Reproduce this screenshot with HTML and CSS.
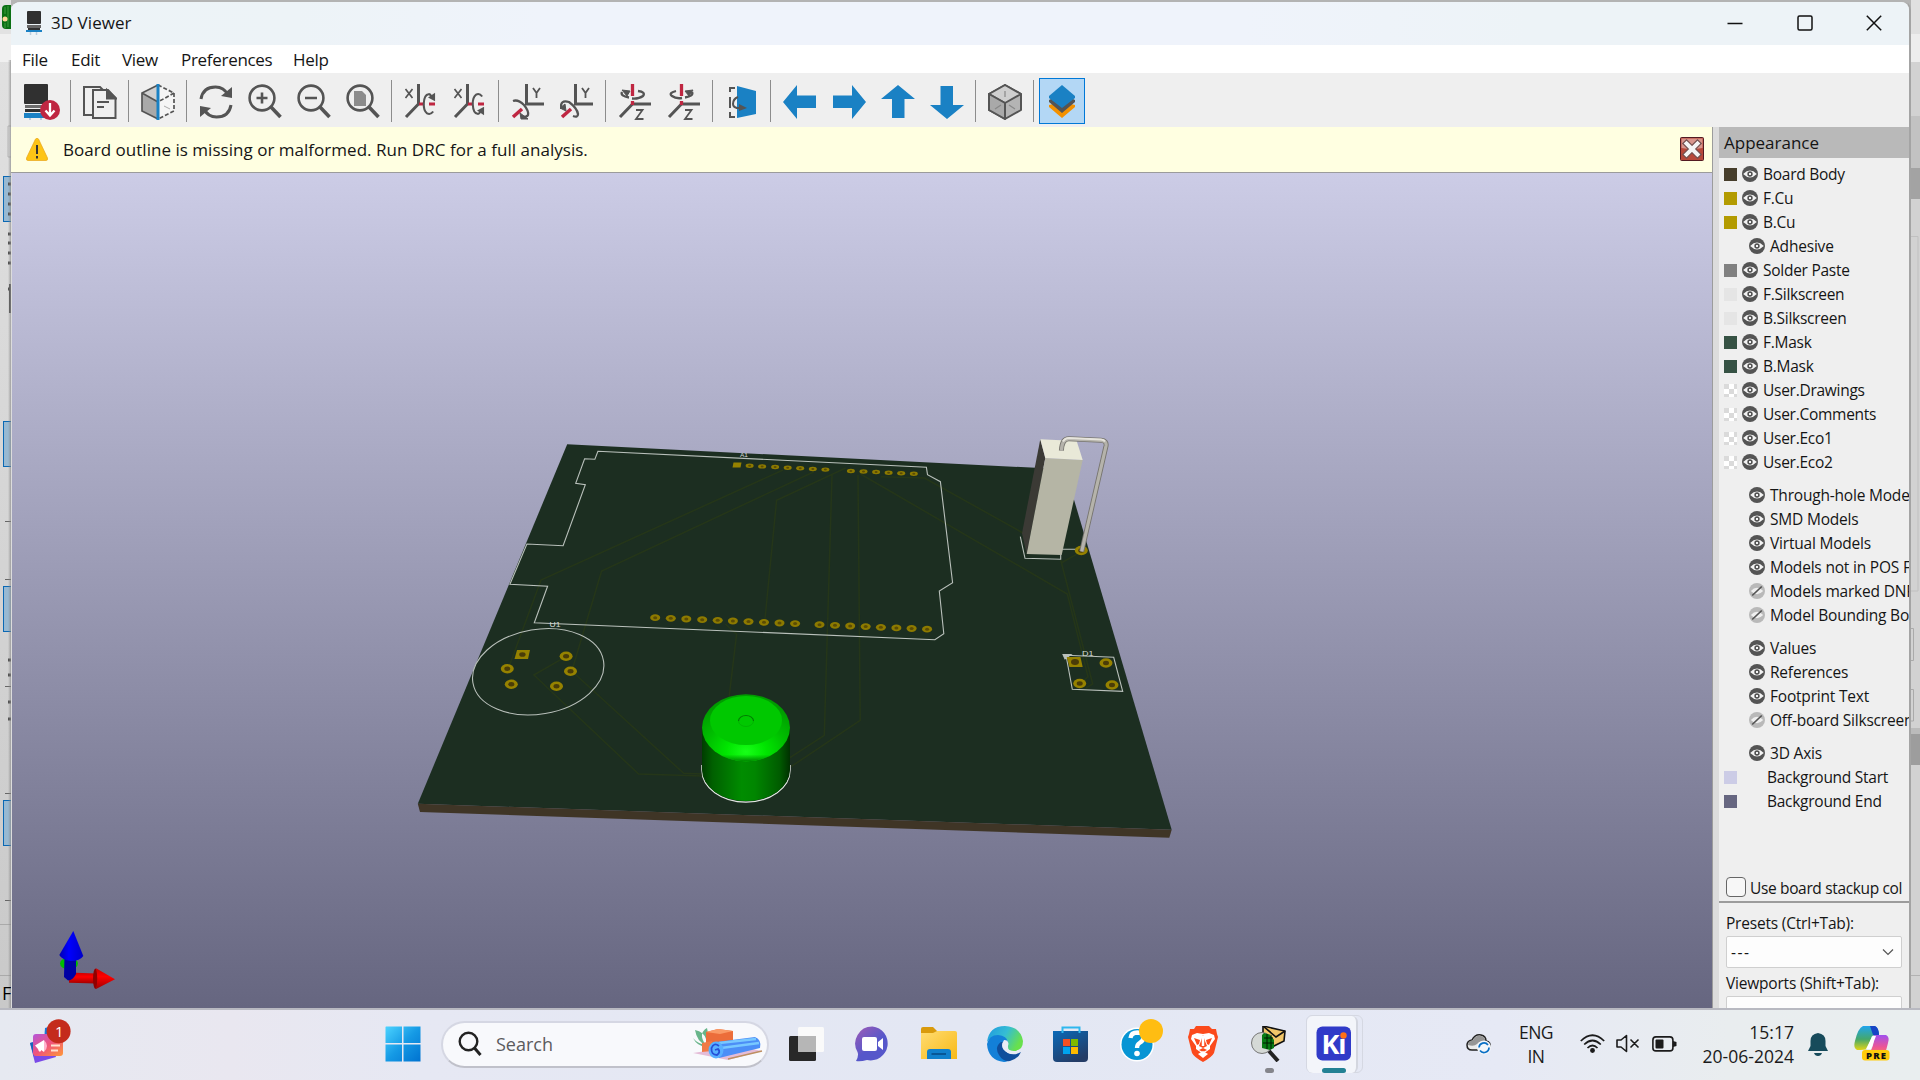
FILE: index.html
```html
<!DOCTYPE html>
<html lang="en">
<head>
<meta charset="utf-8">
<title>3D Viewer</title>
<link rel="stylesheet" href="styles.css">
</head>
<body>
<svg class="defs" aria-hidden="true">
  <defs>
    <symbol id="eye" viewBox="0 0 16 16"><circle cx="8" cy="8" r="8" fill="#545454"/><path d="M1.2 8Q8 1.2 14.800 8Q8 14.800 1.200 8Z" fill="#f4f4f4"/><circle cx="8" cy="8" r="2.700" fill="#545454"/><rect x="7" y="7" width="2" height="2" fill="#f4f4f4"/></symbol>
    <symbol id="eye-off" viewBox="0 0 16 16"><circle cx="8" cy="8" r="8" fill="#b9b9b9"/><path d="M1.800 8Q8 1.600 14.200 8Q8 14.400 1.800 8Z" fill="#efefef"/><path d="M3.200 12.500L12.800 3.500" stroke="#545454" stroke-width="1.700"/></symbol>
    <symbol id="magnifier" viewBox="0 0 34 36"><circle cx="14" cy="14" r="12.400" fill="none" stroke="#545454" stroke-width="2.600"/><path d="M23 23L32.500 33" stroke="#545454" stroke-width="3.600"/></symbol>
    <symbol id="turn" viewBox="0 0 16 26"><path d="M13 21Q10 25 6.500 23Q2.500 20 3 12Q3.500 3 8 2.500Q10 2 11 5" fill="none" stroke="#545454" stroke-width="2.200"/><path d="M7.500 6L15 1V10Z" fill="#545454"/></symbol>
    <symbol id="arrow" viewBox="0 0 34 34"><path d="M0 17L14 0V10.500H33V23H14V34Z" fill="#1a81c4"/></symbol>
    <linearGradient id="bg" x2="0" y2="1"><stop stop-color="#cccce6"/><stop offset="1" stop-color="#666680"/></linearGradient>
  </defs>
</svg>

<div class="desktop">
  <svg class="behind-left" viewBox="0 0 11 1008">
    <defs><linearGradient id="lg" x2="0" y2="1"><stop stop-color="#e2e2e2"/><stop offset="1" stop-color="#c9c9c9"/></linearGradient>
    <linearGradient id="sh"><stop stop-color="#8a8a8a" stop-opacity="0"/><stop offset="1" stop-color="#888" stop-opacity=".7"/></linearGradient></defs>
    <rect width="11" height="1008" fill="url(#lg)"/>
    <rect width="11" height="34" fill="#e2e2e2"/><rect y="34" width="11" height="28" fill="#f0f0f0"/>
    <path d="M11 5H6Q2 5 2 9V25Q2 29 6 29H11Z" fill="#0b7014"/><path d="M5 7V14M8 6V27M5 23V28" stroke="#3f9c3c"/><circle cx="5" cy="19" r="2.500" fill="#ffd79a"/>
    <path d="M11 126H8V157H11" fill="none" stroke="#b5b5b5"/>
    <g fill="#98b9d2" stroke="#0a68b4"><rect x="3.500" y="176.500" width="10" height="45"/><rect x="3.500" y="421.500" width="10" height="45"/><rect x="3.500" y="586.500" width="10" height="45"/><rect x="3.500" y="800.500" width="10" height="45"/></g>
    <path d="M8 184H11M8 194H11M8 204H11M8 214H11M8 234H11M8 243H11M8 253H11M8 263H11M8 289H11M10.500 284V313M8 660H11M8 675H11M8 702H11M8 719H11" stroke="#4c4c4c" stroke-width="3"/>
    <path d="M5 521.500H11M5 579.500H11M5 686.500H11M5 793.500H11M5 900.500H11" stroke="#666"/>
    <path d="M0 924.500H11M0 975.500H11" stroke="#aaa"/>
    <rect x="8" y="60" width="3" height="948" fill="url(#sh)"/>
    <text x="2" y="1000" class="status-letter">F</text>
  </svg>

  <main class="window">
    <header class="titlebar">
      <svg class="app-icon" viewBox="0 0 16 24"><rect x="1" width="14" height="13" rx="1" fill="#303030"/><path d="M1 14H15V17H1Z" fill="#666"/><rect x="2" y="17" width="12" height="2" fill="#303030"/><path d="M0 19H16V21H0Z" fill="#1a81c4"/><path d="M4.500 21V24M10.500 21V24" stroke="#bcd" stroke-width="1.500"/></svg>
      <span class="title">3D Viewer</span>
      <div class="window-controls">
        <svg viewBox="0 0 16 16"><path d="M.5 8.500H15.500"/></svg>
        <svg viewBox="0 0 16 16"><rect x="1" y="1" width="14" height="14" rx="1.500"/></svg>
        <svg viewBox="0 0 16 16"><path d="M.8.8L15.200 15.200M15.200.8L.8 15.200"/></svg>
      </div>
    </header>

    <nav class="menubar"><span>File</span><span>Edit</span><span>View</span><span>Preferences</span><span>Help</span></nav>

    <div class="toolbar">
      <i class="tool"><svg viewBox="0 0 36 36" class="wide"><rect x="0" width="24" height="20" rx="1" fill="#303030"/><path d="M1 21H23V24H1Z" fill="#6c6c6c"/><path d="M1 25H22V28H1Z" fill="#303030"/><rect y="29" width="23" height="5" fill="#1a81c4"/><path d="M6 34V36M17 34V36" stroke="#bcd" stroke-width="2"/><circle cx="26" cy="26" r="10" fill="#bf2641"/><path d="M26 19V31M21.500 26.500L26 31.500L30.500 26.500" fill="none" stroke="#fff" stroke-width="2.300"/></svg></i>
      <b class="sep"></b>
      <i class="tool"><svg viewBox="0 0 34 36" fill="none" stroke="#545454" stroke-width="2"><path d="M9 31H1V3H17L20 6"/><path d="M10 6H25L32.500 14V34H10Z" fill="#efefef"/><path d="M24 6V14.500H33Z" fill="#545454"/><path d="M14 18H26M14 23H21"/></svg></i>
      <b class="sep"></b>
      <i class="tool"><svg viewBox="0 0 34 36"><path d="M1 9L17 18V35L1 27Z" fill="#a9a9a9"/><path d="M1 9L17 1V18Z" fill="#d0d0d0"/><path d="M17 1L1 9V27L17 35M1 9L17 18" fill="none" stroke="#545454" stroke-width="1.700"/><path d="M17 1L33 9V27L17 35M33 9L17 18" fill="#f5f5f5" stroke="#545454" stroke-width="1.700" stroke-dasharray="4 2"/><path d="M23 22L29 25" stroke="#aaa"/><path d="M17 0V36" stroke="#1a81c4" stroke-width="3"/></svg></i>
      <b class="sep"></b>
      <i class="tool"><svg viewBox="0 0 34 36" fill="none" stroke="#545454" stroke-width="3"><path d="M2 15Q4 3 16.500 3Q25 3 29 11M32 21Q30 33 17.500 33Q9 33 5 25"/><path d="M33 3V14L22 12Z" fill="#545454" stroke="none"/><path d="M1 33V22L12 24Z" fill="#545454" stroke="none"/></svg></i>
      <i class="tool"><svg viewBox="0 0 34 36"><use href="#magnifier"/><path d="M8.500 14H19.500M14 8.500V19.500" stroke="#545454" stroke-width="2.600"/></svg></i>
      <i class="tool"><svg viewBox="0 0 34 36"><use href="#magnifier"/><path d="M8 14H20" stroke="#545454" stroke-width="2.600"/></svg></i>
      <i class="tool"><svg viewBox="0 0 34 36"><use href="#magnifier"/><path d="M8 7H16L20 11V22H8Z" fill="#8c8c8c"/></svg></i>
      <b class="sep"></b>
      <i class="tool"><svg viewBox="0 0 34 36" stroke="#545454"><path d="M14.500 0V20L2 33" fill="none" stroke-width="3"/><path d="M1.500 5L8.500 14M8.500 5L1.500 14" stroke-width="1.700"/><path d="M15 20H20M25 20H31" stroke="#bf2641" stroke-width="3"/><use href="#turn" x="17" y="7" width="15" height="26" stroke="none"/></svg></i>
      <i class="tool"><svg viewBox="0 0 34 36" stroke="#545454"><path d="M14.500 0V20L2 33" fill="none" stroke-width="3"/><path d="M1.500 5L8.500 14M8.500 5L1.500 14" stroke-width="1.700"/><path d="M15 20H20M25 20H31" stroke="#bf2641" stroke-width="3"/><use href="#turn" width="15" height="26" stroke="none" transform="translate(17 33) scale(1 -1)" /></svg></i>
      <b class="sep"></b>
      <i class="tool"><svg viewBox="0 0 34 36" stroke="#545454"><path d="M15.500 0V20H33" fill="none" stroke-width="3"/><path d="M22 4L25.500 9L29 4M25.500 9V14" fill="none" stroke-width="1.800"/><path d="M2 33L11 25" stroke="#bf2641" stroke-width="3.500"/><path d="M2 17Q7 15 13 21Q18 27 17 31Q16 33 12 33" fill="none" stroke-width="2.300"/><path d="M9 29L17 35L10 35Z" fill="#545454"/></svg></i>
      <i class="tool"><svg viewBox="0 0 34 36" stroke="#545454"><path d="M15.500 0V20H33" fill="none" stroke-width="3"/><path d="M22 4L25.500 9L29 4M25.500 9V14" fill="none" stroke-width="1.800"/><path d="M2 33L11 25" stroke="#bf2641" stroke-width="3.500"/><path d="M1 25Q0 15 9 18Q17 24 18 30Q18 34 13 32" fill="none" stroke-width="2.300"/><path d="M0 24L5 20L6 27Z" fill="#545454"/></svg></i>
      <b class="sep"></b>
      <i class="tool"><svg viewBox="0 0 34 36" stroke="#545454" fill="none"><path d="M14.500 18V20H33M14.500 20L2 33" stroke-width="3"/><path d="M14.500 0V12M14.500 17V21" stroke="#bf2641" stroke-width="3.300"/><path d="M11 13.500Q2 12 4 8M20 7Q28 8 25 12Q21 15 14 14.500" stroke-width="2.300"/><path d="M4 6L12 7L9 12Z" fill="#545454"/><path d="M18 26H24.500L18 35H25.500" stroke-width="1.800"/></svg></i>
      <i class="tool"><svg viewBox="0 0 34 36" stroke="#545454" fill="none"><path d="M14.500 18V20H33M14.500 20L2 33" stroke-width="3"/><path d="M14.500 0V12M14.500 17V21" stroke="#bf2641" stroke-width="3.300"/><path d="M9 7Q1 9 5 12Q9 15 15 14M18 13.500Q27 12 25 8" stroke-width="2.300"/><path d="M26 6L18 7L22 12Z" fill="#545454"/><path d="M18 26H24.500L18 35H25.500" stroke-width="1.800"/></svg></i>
      <b class="sep"></b>
      <i class="tool"><svg viewBox="0 0 34 36"><path d="M12 2L31 7V30L12 34Z" fill="#1a81c4"/><path d="M10 4H5V8M5 13V24M5 28V33H10M13 13Q8 15 8 20Q8 23 12 24" fill="none" stroke="#545454" stroke-width="2"/><path d="M11 24H18" stroke="#545454" stroke-width="2"/><path d="M14 20L22 24L14 27Z" fill="#545454"/></svg></i>
      <b class="sep"></b>
      <i class="tool"><svg viewBox="0 0 34 36"><use href="#arrow" y="1" width="34" height="34"/></svg></i>
      <i class="tool"><svg viewBox="0 0 34 36"><use href="#arrow" width="34" height="34" transform="translate(34 1) scale(-1 1)"/></svg></i>
      <i class="tool"><svg viewBox="0 0 34 36"><use href="#arrow" width="34" height="34" transform="translate(34 1) rotate(90)"/></svg></i>
      <i class="tool"><svg viewBox="0 0 34 36"><use href="#arrow" width="34" height="34" transform="translate(0 35) rotate(-90)"/></svg></i>
      <b class="sep"></b>
      <i class="tool"><svg viewBox="0 0 34 36" stroke="#545454" stroke-width="2" stroke-linejoin="round"><path d="M17 1L33 10V26L17 35L1 26V10Z" fill="#b4b4b4"/><path d="M17 1L33 10L17 19L1 10Z" fill="#cfcfcf"/><path d="M1 10L17 19V35L1 26Z" fill="#a9a9a9"/><path d="M17 7V13M7 25L13 21M21 21L27 25" stroke="#888" stroke-width="1.200"/></svg></i>
      <b class="sep"></b>
      <i class="tool active"><svg viewBox="0 0 34 36"><path d="M4 22V24L17 35L30 24V22L26 21L17 29L8 21Z" fill="#f39100"/><path d="M4 17V19L17 30L30 19V17L26 15L17 23L8 15Z" fill="#545454"/><path d="M17 2L30 13V15L17 25L4 15V13Z" fill="#1a81c4"/></svg></i>
    </div>

    <div class="workspace">
      <section class="viewer">
        <div class="infobar">
          <svg class="warn" viewBox="0 0 22 23"><path d="M9.500 1Q11 -.6 12.500 1L21.500 20Q22 22.500 20 22.500H2Q0 22.500.5 20Z" fill="#fdc416" stroke="#e8a51a" stroke-width=".7"/><path d="M11 7V16M11 18V20.500" stroke="#333" stroke-width="2"/></svg>
          <span>Board outline is missing or malformed. Run DRC for a full analysis.</span>
          <svg class="dismiss" viewBox="0 0 24 24"><rect x=".5" y=".5" width="23" height="23" rx="1" fill="#b8483a" stroke="#521a22"/><path d="M1.500 1.500H22.500V11Q12 13 1.500 11Z" fill="#d9958c"/><path d="M6.500 6.500L17.500 17.500M17.500 6.500L6.500 17.500" stroke="#75504f" stroke-width="6.500" stroke-linecap="square"/><path d="M6.500 6.500L17.500 17.500M17.500 6.500L6.500 17.500" stroke="#f4f4f4" stroke-width="4" stroke-linecap="square"/></svg>
        </div>
        <svg class="scene" viewBox="12 173 1700 835">
          <defs>
            <linearGradient id="side"><stop stop-color="#003c00"/><stop offset=".12" stop-color="#006000"/><stop offset=".45" stop-color="#008c00"/><stop offset=".6" stop-color="#008600"/><stop offset=".88" stop-color="#005c00"/><stop offset="1" stop-color="#003000"/></linearGradient>
            <radialGradient id="dome" cx=".5" cy=".86" r=".75"><stop stop-color="#18ff18"/><stop offset=".3" stop-color="#00e600"/><stop offset=".62" stop-color="#00be00"/><stop offset="1" stop-color="#009c00"/></radialGradient>
            <linearGradient id="domeshade" x2="0" y2="1"><stop offset=".9" stop-color="#008c00" stop-opacity="0"/><stop offset="1" stop-color="#008600"/></linearGradient>
            <linearGradient id="red" x2="0" y2="1"><stop stop-color="#c00"/><stop offset=".4" stop-color="#f00"/><stop offset="1" stop-color="#a00000"/></linearGradient>
            <linearGradient id="blue"><stop stop-color="#0000b0"/><stop offset=".4" stop-color="#00f"/><stop offset="1" stop-color="#0000c8"/></linearGradient>
            <g id="pad"><ellipse rx="6.500" ry="4.700" fill="#968200"/><ellipse rx="3" ry="2.200" fill="#4a3c08"/></g>
            <g id="pin"><ellipse rx="5" ry="3.400" fill="#8d7a00"/><ellipse rx="2" ry="1.500" fill="#5b4c04"/></g>
            <g id="pin-far"><ellipse rx="4" ry="2.200" fill="#8d7a00"/><ellipse rx="1.500" ry="1" fill="#5b4c04"/></g>
          </defs>
          <rect x="12" y="173" width="1700" height="835" fill="url(#bg)"/>
          <path d="M567.200 444.300L1065 469.300L1171.700 829.700L417.800 803.700Z" fill="#1c2e21"/>
          <path d="M417.800 803.700L1171.700 829.700L1169.300 837.700L420 812Z" fill="#3f3526"/>
          <g fill="none" stroke="#253619" stroke-width="1.500">
            <path d="M783 470L541 580L510 664M814 471.700L601.600 571L572.700 668M845.700 468L776.600 500.300L765 619M832 475L824.300 735.300L788.400 758.700M858 475L860.200 720.300L791 766.700M725.500 624L736.600 634.300L729.200 696M562.800 658.300L533.900 675L638.600 774L703 776M573.900 673L683.700 773.300L703 774"/>
            <path d="M860.500 474L1067.300 594L1088 676.700L1082 682M881 476.700L924.500 478L1023 533M1060.700 560L1092.700 684L1086 688M1062 562.500L1080 552.300"/>
          </g>
          <g fill="none" stroke="#b9c0bb" stroke-width="1.100">
            <path d="M597.900 451.300L926.400 467.300L927.500 474.700L940.400 481.700L952.600 582.700L939.300 591L943.800 633.700L934.900 639.700L534.300 622.700L547.600 586.300L509.900 584.300L526.900 544L563.100 545.700L585.300 484.700L575.700 483.300L584.600 458.700L594.900 459.300Z"/>
            <ellipse cx="538.200" cy="671.800" rx="66.200" ry="42.300" transform="rotate(-9.500 538.200 671.800)"/>
            <path d="M1066 655.300L1113.700 657.300L1122.700 691.300L1072.300 689.300ZM1020.300 536.700L1025 558.300L1060.700 559.300V555M1061 549.300H1076"/>
            <path d="M1063 654.500H1071L1065 659Z" fill="#b9c0bb"/>
          </g>
          <g class="silk-text"><text x="740" y="457" class="far" textLength="8" lengthAdjust="spacingAndGlyphs">A1</text><text x="549.500" y="626.500" textLength="11" lengthAdjust="spacingAndGlyphs">U1</text><text x="1082" y="655.500" textLength="11.500" lengthAdjust="spacingAndGlyphs">D1</text></g>
          <path d="M733.500 462.500H741.500L740.500 467.500H732.500Z" fill="#968200"/>
          <use href="#pin-far" x="749.600" y="465.800"/><use href="#pin-far" x="762.100" y="466.400"/><use href="#pin-far" x="775.100" y="467"/><use href="#pin-far" x="787.700" y="467.700"/><use href="#pin-far" x="800.200" y="468.300"/><use href="#pin-far" x="812.800" y="469"/><use href="#pin-far" x="825.400" y="469.600"/>
          <use href="#pin-far" x="850.900" y="471"/><use href="#pin-far" x="863.500" y="471.500"/><use href="#pin-far" x="876.100" y="472"/><use href="#pin-far" x="888.600" y="472.700"/><use href="#pin-far" x="901.200" y="473.200"/><use href="#pin-far" x="913.800" y="473.800"/>
          <use href="#pin" x="655.200" y="617.700"/><use href="#pin" x="670.800" y="618.300"/><use href="#pin" x="686.300" y="619"/><use href="#pin" x="702.200" y="619.700"/><use href="#pin" x="717.700" y="620.300"/><use href="#pin" x="732.900" y="621"/><use href="#pin" x="748.500" y="621.600"/><use href="#pin" x="764" y="622.300"/><use href="#pin" x="779.500" y="623"/><use href="#pin" x="795.100" y="623.600"/>
          <use href="#pin" x="819.500" y="624.700"/><use href="#pin" x="835" y="625.300"/><use href="#pin" x="850.200" y="626"/><use href="#pin" x="865.700" y="626.600"/><use href="#pin" x="880.900" y="627.300"/><use href="#pin" x="896.400" y="627.900"/><use href="#pin" x="911.600" y="628.500"/><use href="#pin" x="927.100" y="629.200"/>
          <path d="M517 650H530L528 659H514.500Z" fill="#968200"/><ellipse cx="522.400" cy="654.500" rx="3.200" ry="2.300" fill="#4a3c08"/>
          <use href="#pad" x="507.300" y="668.700"/><use href="#pad" x="511.300" y="684.300"/><use href="#pad" x="566.100" y="656.300"/><use href="#pad" x="570.500" y="671.300"/><use href="#pad" x="556.500" y="686.200"/>
          <path d="M1066.700 657H1080.500L1082.700 667H1069.500Z" fill="#968200"/><ellipse cx="1075" cy="662" rx="4" ry="3" fill="#4a3c08"/>
          <use href="#pad" x="1106" y="663"/><use href="#pad" x="1079.700" y="683.500"/><use href="#pad" x="1112" y="685"/><use href="#pad" x="1081.300" y="550.500"/>
          <path d="M701.900 765V770A44.100 32.200 0 0 0 790.100 770V765" fill="none" stroke="#e4e8e4" stroke-width="1.200"/>
          <path d="M702 728V770A44 31 0 0 0 790 770V728Z" fill="url(#side)"/>
          <ellipse cx="746" cy="727.700" rx="44" ry="33.500" fill="url(#dome)"/><ellipse cx="746" cy="727.700" rx="44" ry="33.500" fill="url(#domeshade)"/>
          <ellipse cx="746" cy="720.500" rx="36" ry="24.500" fill="#00c800"/>
          <path d="M738.500 721A7.500 5.500 0 0 1 753.500 721" fill="none" stroke="#007c00" stroke-width="1.200"/><path d="M738.500 721A7.500 5.500 0 0 0 753.500 721" fill="none" stroke="#00b400"/>
          <path d="M1040.300 439.300L1045.300 458L1026.700 554L1022 533.300Z" fill="#3b3a35"/>
          <path d="M1045.300 458L1082.700 460L1061.700 555L1026.700 554Z" fill="#b5b5a5"/>
          <path d="M1040.300 439.300L1076.700 441L1082.700 460L1045.300 458Z" fill="#e9e9d8"/>
          <path d="M1061.400 450.700Q1062 438.500 1069 438.800L1101 440.300Q1107 440.800 1106 446L1081.700 551.500" fill="none" stroke="#77756f" stroke-width="5"/>
          <path d="M1061.400 450.700Q1062 438.500 1069 438.800L1101 440.300Q1107 440.800 1106 446L1081.700 551.500" fill="none" stroke="#b5b3ab" stroke-width="3.200"/>
          <path d="M1063 441.500Q1065 438 1069 438L1101 439.500Q1104 439.800 1105 441.500" fill="none" stroke="#e6e4dc" stroke-width="2.200"/>
          <ellipse cx="69" cy="963.500" rx="9" ry="6" fill="#00bd00"/>
          <path d="M69 972.500L96 973.500V983.500L69 982.700Z" fill="url(#red)"/>
          <ellipse cx="95.500" cy="978.700" rx="2.500" ry="10.300" fill="#900000"/><path d="M96 968.300L115 979.300L96 989Q98.500 979 96 968.300Z" fill="url(#red)"/>
          <path d="M64.500 955H76V974Q73 980 68 980.500L64 977Z" fill="#0000a4"/>
          <path d="M73.300 931L83.300 956Q80 961 71 961Q62 960 59.300 955Z" fill="url(#blue)"/>
        </svg>
      </section>

      <aside class="appearance">
        <h2>Appearance</h2>
        <ul class="layers">
          <li><i class="sw body"></i><svg><use href="#eye"/></svg>Board Body</li>
          <li><i class="sw cu"></i><svg><use href="#eye"/></svg>F.Cu</li>
          <li><i class="sw cu"></i><svg><use href="#eye"/></svg>B.Cu</li>
          <li class="in"><svg><use href="#eye"/></svg>Adhesive</li>
          <li><i class="sw paste"></i><svg><use href="#eye"/></svg>Solder Paste</li>
          <li><i class="sw silk"></i><svg><use href="#eye"/></svg>F.Silkscreen</li>
          <li><i class="sw silk"></i><svg><use href="#eye"/></svg>B.Silkscreen</li>
          <li><i class="sw mask"></i><svg><use href="#eye"/></svg>F.Mask</li>
          <li><i class="sw mask"></i><svg><use href="#eye"/></svg>B.Mask</li>
          <li><i class="sw clear"></i><svg><use href="#eye"/></svg>User.Drawings</li>
          <li><i class="sw clear"></i><svg><use href="#eye"/></svg>User.Comments</li>
          <li><i class="sw clear"></i><svg><use href="#eye"/></svg>User.Eco1</li>
          <li><i class="sw clear"></i><svg><use href="#eye"/></svg>User.Eco2</li>
        </ul>
        <ul class="layers">
          <li class="in"><svg><use href="#eye"/></svg>Through-hole Models</li>
          <li class="in"><svg><use href="#eye"/></svg>SMD Models</li>
          <li class="in"><svg><use href="#eye"/></svg>Virtual Models</li>
          <li class="in"><svg><use href="#eye"/></svg>Models not in POS File</li>
          <li class="in"><svg><use href="#eye-off"/></svg>Models marked DNP</li>
          <li class="in"><svg><use href="#eye-off"/></svg>Model Bounding Boxes</li>
        </ul>
        <ul class="layers">
          <li class="in"><svg><use href="#eye"/></svg>Values</li>
          <li class="in"><svg><use href="#eye"/></svg>References</li>
          <li class="in"><svg><use href="#eye"/></svg>Footprint Text</li>
          <li class="in"><svg><use href="#eye-off"/></svg>Off-board Silkscreen</li>
        </ul>
        <ul class="layers">
          <li class="in"><svg><use href="#eye"/></svg>3D Axis</li>
          <li class="plain"><i class="sw start"></i>Background Start</li>
          <li class="plain"><i class="sw end"></i>Background End</li>
        </ul>
        <div class="stackup"><i class="checkbox"></i><span>Use board stackup col</span></div>
        <div class="presets">
          <label>Presets (Ctrl+Tab):</label>
          <div class="combo"><span>---</span><svg viewBox="0 0 12 8"><path d="M1 1.500L6 6.500L11 1.500"/></svg></div>
          <label class="second">Viewports (Shift+Tab):</label>
          <div class="combo"></div>
        </div>
      </aside>
    </div>
  </main>

  <svg class="behind-right" viewBox="0 0 9 1008"><rect width="9" height="1008" fill="#d2d2d2"/><rect width="9" height="34" fill="#e0e0e0"/><rect y="34" width="9" height="28" fill="#ededed"/><rect y="116" width="9" height="52" fill="#c2c2c2"/><rect y="168" width="9" height="31" fill="#a3a3a3"/><path d="M0 236.500H7V591H0" fill="none" stroke="#c0c0c0"/><path d="M0 628.500H2.500V660.500H0M0 689.500H2.500V721H0" fill="none" stroke="#aaa"/><rect y="728" width="9" height="6" fill="#bbb"/><rect y="734" width="9" height="31" fill="#9d9d9d"/><path d="M0 975.500H9" stroke="#b2b2b2"/></svg>
</div>

<footer class="taskbar">
  <svg class="widgets" viewBox="30 1018 42 46"><defs><linearGradient id="wg" x2="1" y2="1"><stop stop-color="#b455dc"/><stop offset=".5" stop-color="#f0537a"/><stop offset="1" stop-color="#ff9838"/></linearGradient></defs><path d="M45 1027L52 1025V1040H44Z" fill="#1577dc"/><path d="M30 1042L50 1036L56 1056L35 1062Z" fill="#7a4ae8"/><path d="M30 1042L34 1041V1056Z" fill="#1768b8"/><rect x="33" y="1033" width="30" height="22" rx="3" fill="url(#wg)"/><path d="M35 1044.500L44 1039V1051L41 1049V1050Q39 1052 38 1048Z" fill="#fff"/><path d="M44 1039Q50 1045 44 1051Z" fill="#ffb3cd"/><path d="M51 1044.500H60M51 1049.500H58" stroke="#ffe0d0" stroke-width="2"/><circle cx="58.600" cy="1030.300" r="12" fill="#c42b1c"/><text x="55" y="1036" class="badge-text">1</text></svg>
  <svg class="start" viewBox="0 0 36 36"><defs><linearGradient id="wn" x2="1" y2="1"><stop stop-color="#4cd3ff"/><stop offset=".5" stop-color="#159ae5"/><stop offset="1" stop-color="#0072d0"/></linearGradient></defs><path d="M1 .5H17V17H.5V1ZM18.500.5H35.500V17H18.500ZM.5 18.500H17V35.500H.5ZM18.500 18.500H35.500V35.500H18.500Z" fill="url(#wn)"/></svg>
  <div class="search">
    <svg class="lens" viewBox="0 0 24 26"><circle cx="10.500" cy="10.500" r="8.800" fill="none" stroke="#222" stroke-width="2.400"/><path d="M16.500 17L22.500 24" stroke="#222" stroke-width="3"/></svg>
    <span>Search</span>
    <svg class="doodle" viewBox="0 0 70 32"><path d="M0 25L45 18L69 23L35 32Z" fill="#e4bcd7"/><path d="M35 31L69 23" stroke="#bd8f61" stroke-width="1.500"/><path d="M13 17Q4 14 2 2Q11 4 13 11Q16 7 14 0Q5 5 12 16Q6 17 0 10Q4 18 13 19Z" fill="#68b58a"/><path d="M13 4L25 1L40 3V13L26 16H13Z" fill="#ec6d3a"/><path d="M13 4L25 1L40 3L27 6Z" fill="#fa9a66"/><path d="M9 15L19 13V23L9 24Z" fill="#f07a46"/><path d="M23 14L62 9Q69 12 67 20L26 30Z" fill="#4c8ef7"/><path d="M26 15L63 11M28 20L66 15" stroke="#78c8ff" stroke-width="2.500"/><ellipse cx="23" cy="22" rx="7.500" ry="8.500" fill="#58b0ff"/><path d="M26 18Q21 14 18.500 20Q18 27 24 27Q28 24 25 21L22 22" fill="none" stroke="#2650d8" stroke-width="1.800"/></svg>
  </div>
  <svg class="taskview" viewBox="0 0 36 36"><rect x="0" y="10" width="27" height="25" rx="1.500" fill="#282828"/><rect x="9" y="1" width="26" height="25" rx="1.500" fill="#fafafa"/><path d="M9 10H27V26H10.500Q9 26 9 24.500Z" fill="#b6b6b6"/></svg>
  <svg class="chat" viewBox="0 0 36 36"><defs><linearGradient id="ct" x2=".8" y2="1"><stop stop-color="#a05bb5"/><stop offset=".6" stop-color="#5657ca"/></linearGradient></defs><path d="M17.500.5A17 17 0 1 1 12 34Q5 36 1 35Q4 30 2.500 26A17 17 0 0 1 17.500.5Z" fill="url(#ct)"/><rect x="7" y="11" width="15" height="14" rx="2" fill="#fff"/><path d="M23 16L28 12V24L23 20Z" fill="#fff"/></svg>
  <svg class="folder" viewBox="0 0 36 36"><defs><linearGradient id="fd" x2="1" y2="1"><stop stop-color="#ffdc72"/><stop offset="1" stop-color="#f8b916"/></linearGradient></defs><path d="M0 3Q0 1 2 1H12L16 5H34V14H0Z" fill="#d99a0c"/><path d="M0 7H12L16 5H34Q36 5 36 7V33H0Z" fill="url(#fd)"/><path d="M6 33V26Q6 23 9 23H27Q30 23 30 26V33Z" fill="#1080cc"/><path d="M10.500 28H25" stroke="#075796" stroke-width="2"/></svg>
  <svg class="edge" viewBox="0 0 36 36"><defs><linearGradient id="e1" x2="1" y2=".4"><stop stop-color="#1e98e0"/><stop offset=".55" stop-color="#35bdd4"/><stop offset="1" stop-color="#68e04d"/></linearGradient></defs><path d="M0 16Q2 0 18 0Q34 1 36 15Q36 25 26 25Q19 25 21 20Q23 14 15 11Q6 8 0 16Z" fill="url(#e1)"/><path d="M0 18Q2 9 11 9Q20 10 21 16Q13 14 13 22Q14 30 25 32Q21 36 17 36Q1 34 0 18Z" fill="#1380d8"/><path d="M14 16Q7 21 12 29Q16 36 23 35Q31 33 34 26Q27 30 21 27Q13 23 16 16Z" fill="#0f4e9c"/><path d="M17 14Q22 14 21 19Q20 25 27 25Q31 25 34 23Q29 30 21 27Q12 22 17 14Z" fill="#e8ecf5"/></svg>
  <svg class="store" viewBox="0 0 36 36"><defs><linearGradient id="st" x2=".6" y2="1"><stop stop-color="#0969b8"/><stop offset="1" stop-color="#243c66"/></linearGradient></defs><path d="M9.500 7V1.500H26.500V7" fill="none" stroke="#2eb7ee" stroke-width="2"/><path d="M0 5H35V32Q35 36 31 36H4Q0 36 0 32Z" fill="url(#st)"/><path d="M9.500 5V7M26.500 5V7" stroke="#2eb7ee" stroke-width="2"/><path d="M10 13H17V20H10Z" fill="#f25022"/><path d="M18 13H25V20H18Z" fill="#7fba00"/><path d="M10 21H17V28H10Z" fill="#00a4ef"/><path d="M18 21H25V28H18Z" fill="#ffb900"/></svg>
  <svg class="help" viewBox="0 0 44 44"><circle cx="17" cy="26.500" r="17" fill="#fff"/><circle cx="17" cy="26.500" r="15.500" fill="#0795d4"/><path d="M10.500 20Q11 14.500 17.500 14.500Q24 15 23.500 20Q23 23 19.500 25Q17 26.500 17 30" fill="none" stroke="#fff" stroke-width="4.300"/><circle cx="17" cy="35.500" r="2.800" fill="#fff"/><circle cx="31" cy="13" r="12" fill="#ffbd12"/></svg>
  <svg class="brave" viewBox="0 0 32 36"><path d="M9 0H22L25 3L29 3L30 8L31 11L27 27Q25 31 16 36Q7 31 5 27L1 11L2 8L3 3L7 3Z" fill="#fb4a1c"/><path d="M5 9L10 7L16 8L22 7L27 9L28 13L23 20L23 23L16 28L9 23V20L4 13Z" fill="#fff"/><path d="M7 12L13 14L12 18L10 19ZM25 12L19 14L20 18L22 19ZM16 9L18 15L20 20L16 22L12 20L14 15ZM12 24L16 22L20 24L16 26Z" fill="#fb4a1c"/><path d="M16 10V20" stroke="#fff" stroke-width="2.500"/><path d="M11 28L16 25L21 28L16 32Z" fill="#fff"/></svg>
  <div class="running"><svg class="inspect" viewBox="0 0 36 36"><path d="M12 0L34 5L33 15L19 22L12 14Z" fill="#f1c669" stroke="#111" stroke-width="1.600"/><path d="M12 0L25 11L34 5" fill="none" stroke="#111" stroke-width="1.600"/><circle cx="11" cy="17" r="10.500" fill="#d5d9d6" stroke="#777"/><path d="M13 7Q20 8 23 14V22L19 24L11 22V9Z" fill="#087c14"/><path d="M13 12H22M12 17H23M16 8V23M20 9V23" stroke="#001b03"/><path d="M18 25L27 35" stroke="#222" stroke-width="4"/></svg><i></i></div>
  <div class="current"><div class="tile"><svg viewBox="0 0 36 36"><rect x=".5" y=".5" width="34.500" height="34" rx="6" fill="#303ac8"/><text x="5.500" y="28" class="ki-text" textLength="25">Kı</text><circle cx="27.500" cy="9.500" r="3.200" fill="#ff7016"/></svg><i></i></div></div>
  <svg class="cloud" viewBox="0 0 26 22"><path d="M6 17Q1 17 1 12Q1 8 6 7Q9 1 15 2Q20 3 20 8Q25 9 24 14Q23 17 20 17Z" fill="#ececec" stroke="#222" stroke-width="1.500"/><path d="M7 7Q10 2 15 3Q20 4 19 9Q14 7 11 11Q8 14 2 12Q2 8 7 7Z" fill="#969696"/><circle cx="18" cy="14.500" r="7" fill="#f4f7fb"/><path d="M13 14.500A5 5 0 0 1 22 12M23 14.500A5 5 0 0 1 14 17.500" fill="none" stroke="#0b70c5" stroke-width="1.700"/></svg>
  <div class="lang"><span>ENG</span><span>IN</span></div>
  <svg class="wifi" viewBox="0 0 25 20" fill="none" stroke="#1b1b1b" stroke-width="1.700"><path d="M.8 7Q12.500-4.500 24.200 7M4.200 10.500Q12.500 2.500 20.800 10.500M7.500 14Q12.500 9 17.500 14"/><circle cx="12.500" cy="16.500" r="1.600" fill="#1b1b1b"/></svg>
  <svg class="sound" viewBox="0 0 24 20" fill="none" stroke="#1b1b1b" stroke-width="1.600"><path d="M1 6H5L10.500 1.500V17.500L5 13H1ZM14.500 5.500L22.500 13.500M22.500 5.500L14.500 13.500" stroke-linejoin="round"/></svg>
  <svg class="battery" viewBox="0 0 25 16"><rect x=".9" y=".9" width="20" height="14" rx="3" fill="none" stroke="#1b1b1b" stroke-width="1.600"/><rect x="3.500" y="3.500" width="8" height="9" rx="1" fill="#1b1b1b"/><path d="M21 5L24.500 6V10L21 11Z" fill="#1b1b1b"/></svg>
  <div class="clock"><span>15:17</span><span>20-06-2024</span></div>
  <svg class="bell" viewBox="0 0 20 23"><path d="M10 0Q17.500 1 17.500 8V13L20 18H0L2.500 13V8Q2.500 1 10 0ZM6 20H14Q13 23 10 23Q7 23 6 20Z" fill="#174b5b"/></svg>
  <svg class="copilot" viewBox="0 0 36 36"><defs><linearGradient id="c1" x2="0" y2="1"><stop stop-color="#20a5ee"/><stop offset=".55" stop-color="#45a86b"/><stop offset="1" stop-color="#e2d516"/></linearGradient><linearGradient id="c2" x2="0" y2="1"><stop stop-color="#a050ef"/><stop offset=".5" stop-color="#ed5595"/><stop offset="1" stop-color="#ff963f"/></linearGradient></defs><path d="M9 0H21Q24 1 25 8L18 10L13 23Q11 24 3 24Q-1 22 1 15Q4 2 9 0Z" fill="url(#c1)"/><path d="M16 0H21Q25 2 25 9H19Z" fill="#1745c5"/><path d="M20 9H32Q36 11 34 17Q31 31 26 33H13L18 22Q20 18 20 9Z" fill="url(#c2)"/><path d="M18 11Q21 9 22 10L17 23H12Z" fill="#fff"/><rect x="8" y="24" width="27.500" height="10.500" rx="3" fill="#ffcb0b"/><text x="12" y="33" class="pre-text" textLength="20">PRE</text></svg>
</footer>
</body>
</html>
```
FILE: styles.css
```css
* { box-sizing: border-box; }
body { margin: 0; width: 1920px; height: 1080px; overflow: hidden; background: #b5b5b5; color: #151515; font-family: "Open Sans", "Noto Sans", sans-serif; font-size: 17px; }
svg { display: block; flex: none; }
.defs { position: absolute; width: 0; height: 0; }

.desktop { display: grid; grid-template-columns: 11px 1900px 9px; height: 1008px; overflow: hidden; }
.behind-left { width: 11px; height: 1008px; }
.behind-right { width: 9px; height: 1008px; }
.status-letter { font-size: 18px; }
.window { display: flex; flex-direction: column; height: 1008px; border-top: 2px solid #b3b3b3; border-right: 2px solid #a4a4a4; border-radius: 10px 10px 0 0; background: #efefef; overflow: hidden; }

.titlebar { display: flex; align-items: center; height: 43px; flex: none; padding: 0 0 2px 15px; background: linear-gradient(90deg, #ecf3f7 0, #edf3f7 15%, #eff3fb 28%, #eff3fb 65%, #edf3f7 80%); }
.app-icon { width: 16px; height: 24px; }
.title { margin-left: 9px; font-size: 17px; letter-spacing: .05px; }
.window-controls { display: flex; gap: 53.500px; margin-left: auto; padding-right: 27px; }
.window-controls svg { width: 16px; height: 16px; fill: none; stroke: #111; stroke-width: 1.500; }

.menubar { display: grid; grid-template-columns: 49px 51px 59px 112px 60px; align-items: center; height: 28px; flex: none; padding: 1px 0 0 11px; background: #fff; font-size: 17px; letter-spacing: -.3px; }

.toolbar { display: flex; align-items: center; height: 54px; flex: none; padding: 0 0 0 6px; }
.tool { display: flex; align-items: center; justify-content: center; width: 49px; height: 46px; padding-top: 3px; }
.tool svg { width: 34px; height: 36px; }
.tool .wide { width: 36px; height: 36px; margin-left: 1px; }
.tool.active { width: 46px; margin: 1px 0 0 1px; padding-top: 0; border: 1px solid #0078d7; background: #b3d7f5; }
.sep { flex: none; width: 1px; height: 42px; margin: 1px 4px 0; background: #8c8c8c; }

.workspace { display: grid; grid-template-columns: 1702px 190px; column-gap: 6px; flex: 1; min-height: 0; background: #dcdcdc; }
.viewer { border-right: 1px solid #9c9c9c; min-width: 0; }
.infobar { display: flex; align-items: center; height: 46px; padding: 0 8px 1px 15px; background: #ffffe1; border-bottom: 1px solid #9b9b9b; font-size: 17px; }
.infobar span { margin-left: 15px; letter-spacing: .025px; }
.warn { width: 22px; height: 23px; }
.dismiss { width: 24px; height: 24px; margin-left: auto; }
.scene { width: 1700px; height: 835px; margin-left: 1px; }
.silk-text { fill: #d5dad5; font: 400 7px "Liberation Sans", sans-serif; }
.silk-text .far { font-size: 5px; }

.appearance { background: #efefef; overflow: hidden; font-size: 15.500px; letter-spacing: -.2px; white-space: nowrap; }
.appearance h2 { margin: 0 0 4px; padding-left: 5px; height: 31px; line-height: 31px; background: #b9b9b9; font-size: 17px; font-weight: 400; letter-spacing: 0; }
.layers { list-style: none; margin: 0 0 9px; padding: 0 0 0 5px; }
.layers li { display: flex; align-items: center; height: 24px; letter-spacing: -.27px; }
.layers svg { width: 16px; height: 16px; margin-right: 5px; }
.layers .in { padding-left: 25px; letter-spacing: -.2px; }
.sw { width: 13px; height: 13px; margin-right: 5px; }
.plain .sw { margin-right: 30px; }
.body { background: #463d2b; }
.cu { background: #b39b00; }
.paste { background: #808080; }
.silk { background: #e5e5e5; }
.mask { background: #365244; }
.clear { background: conic-gradient(#fff 25%, #dadada 0 50%, #fff 0 75%, #dadada 0) 0 0 / 10px 10px; }
.sw.start { background: #cccce6; }
.sw.end { background: #666680; }
.stackup { display: flex; align-items: center; margin-top: 57px; height: 33px; padding: 2px 0 0 7px; border-bottom: 2px solid #9c9c9c; }
.stackup span { margin-left: 4px; padding-top: 2px; letter-spacing: -.35px; }
.checkbox { width: 20px; height: 20px; border: 1.500px solid #666; border-radius: 4px; background: #f7f7f7; }
.presets { padding: 7px 7px 0; }
.presets label { display: block; height: 26px; line-height: 26px; }
.presets .second { margin-top: 4px; height: 24px; line-height: 23px; }
.combo { display: flex; align-items: center; justify-content: space-between; height: 32px; padding: 0 7px 0 4px; border: 1px solid #cfcfcf; border-radius: 2px; background: #fdfdfd; }
.combo span { letter-spacing: 1.500px; }
.combo svg { width: 12px; height: 8px; fill: none; stroke: #555; stroke-width: 1.200; }

.taskbar { display: flex; align-items: center; height: 72px; padding: 0 0 2px 30px; border-top: 2px solid #b8b9c1; background: linear-gradient(90deg, #e6e9f1 0, #e9e7f0 12%, #e6e8f3 22%, #e3e7f3 50%, #e6e9f5 78%, #e9edef 90%, #e9eeef); color: #1b1b1b; }
.taskbar > svg { width: 36px; height: 36px; }
.taskbar .widgets { width: 42px; height: 46px; margin-top: -4px; }
.badge-text { fill: #fff; font-size: 15px; }
.taskbar .start { margin-left: 313px; }
.search { display: flex; align-items: center; width: 328px; height: 47px; margin-left: 20px; padding: 0 4px 0 15px; border: 2px solid #d5d7e3; border-bottom-color: #c0c1ca; border-radius: 24px; background: #f8f9fc; }
.lens { width: 24px; height: 26px; }
.search span { margin-left: 14px; color: #5b5b5e; font-size: 18px; }
.doodle { width: 70px; height: 32px; margin-left: auto; }
.taskbar .taskview { margin-left: 20px; }
.taskbar .chat { margin-left: 30px; }
.taskbar .folder { margin-left: 30px; }
.taskbar .edge { margin-left: 30px; }
.taskbar .store { margin-left: 30px; }
.taskbar .help { width: 44px; height: 44px; margin: -8px 0 0 31px; }
.taskbar .brave { width: 32px; margin-left: 23px; }
.running, .tile { display: flex; flex-direction: column; align-items: center; }
.running { margin-left: 32px; padding-top: 11px; }
.inspect { width: 36px; height: 36px; }
.running i { width: 9px; height: 5px; margin-top: 6px; border-radius: 3px; background: #84858b; }
.current { width: 57px; height: 58px; margin-left: 19px; border: 1px solid #d5d8e2; border-radius: 6px; }
.tile { width: 51px; height: 57px; padding: 10px 0 0 5px; border-right: 2px solid #d3d6df; border-radius: 6px; background: #f3f5fa; }
.tile svg { width: 36px; height: 36px; }
.tile i { width: 24px; height: 5px; margin-top: 6px; border-radius: 3px; background: #238194; }
.ki-text { fill: #fff; font: 700 27px "Open Sans", sans-serif; }
.taskbar .cloud { width: 26px; height: 22px; margin-left: 103px; }
.lang, .clock { display: flex; flex-direction: column; font-size: 17.500px; line-height: 24px; }
.lang { width: 36px; margin-left: 26px; text-align: center; letter-spacing: -.5px; }
.taskbar .wifi { width: 25px; height: 20px; margin-left: 26px; }
.taskbar .sound { width: 24px; height: 20px; margin-left: 11px; }
.taskbar .battery { width: 25px; height: 16px; margin-left: 12px; }
.clock { width: 95px; margin-left: 22px; text-align: right; letter-spacing: .02px; }
.taskbar .bell { width: 20px; height: 23px; margin-left: 14px; }
.taskbar .copilot { margin-left: 26px; }
.pre-text { fill: #111; font: 800 9.500px "Open Sans", sans-serif; }
```
